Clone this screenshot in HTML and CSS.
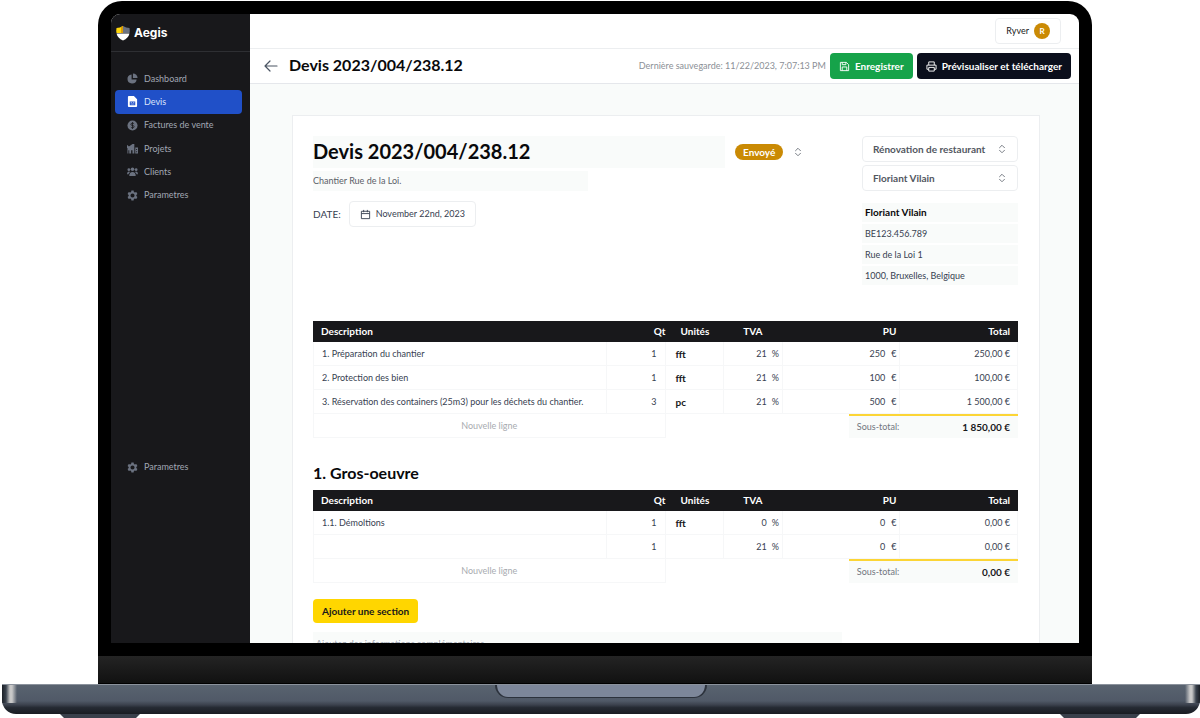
FILE: index.html
```html
<!DOCTYPE html>
<html lang="fr">
<head>
<meta charset="utf-8">
<meta name="viewport" content="width=device-width, initial-scale=1">
<title>Aegis – Devis 2023/004/238.12</title>
<link rel="stylesheet" href="styles.css">
</head>
<body>
<svg class="symbols" aria-hidden="true">
  <symbol id="gear" viewBox="0 0 24 24"><path fill-rule="evenodd" d="M9.600 1h4.800l.7 3.200 2 1.200 3.200-1 2.400 4.200-2.400 2.200v2.400l2.400 2.200-2.400 4.200-3.200-1-2 1.200-.7 3.200H9.600l-.7-3.200-2-1.200-3.200 1-2.400-4.200 2.400-2.200v-2.400L1.300 8.600l2.400-4.200 3.200 1 2-1.200zM12 7.500a4.500 4.500 0 1 0 0 9 4.500 4.500 0 0 0 0-9z"/></symbol>
  <symbol id="updown" viewBox="0 0 12 16"><path d="M2 6l4-4 4 4M2 10l4 4 4-4" fill="none" stroke="currentColor" stroke-width="1.500" stroke-linecap="round" stroke-linejoin="round"/></symbol>
</svg>
<div class="laptop">
  <div class="lid">
    <div class="screen">
      <aside class="sidebar">
        <a class="brand" href="#">
          <svg class="brand-logo" viewBox="0 0 28 32"><path fill="#ffd60a" d="M14 2v14H1q-1-5 0-10 7 0 13-4z"/><path fill="#6b7280" d="M14 2v14h13q1-5 0-10-7 0-13-4z"/><path fill="#d99a06" d="M10 4l4-2v14h-4z"/><path fill="#fff" d="M1 17h26q-2 9-13 14Q3 26 1 17z"/></svg>
          Aegis
        </a>
        <nav class="nav">
          <a href="#"><svg viewBox="0 0 24 24"><path d="M10 3v11h11A10 10 0 1 1 10 3z"/><path d="M13 1a10 10 0 0 1 10 10H13z"/></svg>Dashboard</a>
          <a class="active" href="#" aria-current="page"><svg viewBox="0 0 24 24"><path fill-rule="evenodd" d="M4 0h11l7 7v15q0 2-2 2H4q-2 0-2-2V2q0-2 2-2zm2 12v8h12v-8zm2 2h3v1H8zm5 0h3v1h-3zm-5 3h8v1H8z"/></svg>Devis</a>
          <a href="#"><svg viewBox="0 0 24 24"><circle cx="12" cy="12" r="11"/><path d="M15.500 8.500Q14.500 7 12 7q-3.500 0-3.500 2.500T12 12t3.500 2.500T12 17q-2.500 0-3.500-1.500M12 4.500v15" fill="none" stroke="#18181b" stroke-width="1.800"/></svg>Factures de vente</a>
          <a href="#"><svg viewBox="0 0 24 24"><path d="M0 5h2l1 2h2l7-5h4v21h-4v-7H9v7H5v-7H3v7H1V11H0z"/><path fill-rule="evenodd" d="M18 10h6v13h-6zm2 3v2h2v-2zm0 5v2h2v-2z"/></svg>Projets</a>
          <a href="#"><svg viewBox="0 0 24 24"><circle cx="12" cy="7" r="4"/><circle cx="4" cy="8" r="3"/><circle cx="20" cy="8" r="3"/><path d="M5 22q0-9 7-9t7 9zM0 18q0-6 4-6 2 0 3 1-3 2-4 5H0zM24 18q0-6-4-6-2 0-3 1 3 2 4 5h3z"/></svg>Clients</a>
          <a href="#"><svg><use href="#gear"/></svg>Parametres</a>
        </nav>
        <nav class="nav nav-secondary" aria-label="Réglages">
          <a href="#"><svg><use href="#gear"/></svg>Parametres</a>
        </nav>
      </aside>
      <div class="app">
        <header class="topbar">
          <button class="btn btn-outline account" type="button">Ryver <span class="avatar">R</span></button>
        </header>
        <header class="actionbar">
          <a class="back" href="#" aria-label="Retour"><svg viewBox="0 0 16 16"><path d="M14 8H2M7 3L2 8l5 5"/></svg></a>
          <h1>Devis 2023/004/238.12</h1>
          <span class="saved">Dernière sauvegarde: 11/22/2023, 7:07:13 PM</span>
          <button class="btn btn-green" type="button"><svg viewBox="0 0 24 24"><path d="M4 3h12l5 5v13H3V3zM7 3v5h8V3M7 21v-8h10v8"/></svg>Enregistrer</button>
          <button class="btn btn-dark" type="button"><svg viewBox="0 0 24 24"><path d="M6 9V2h12v7M6 18H2V9h20v9h-4M6 14h12v8H6z"/></svg>Prévisualiser et télécharger</button>
        </header>
        <main class="workspace">
          <article class="sheet">
            <section class="intro">
              <div class="intro-main">
                <input class="field field-title" aria-label="Titre" value="Devis 2023/004/238.12">
                <input class="field field-note" aria-label="Description" value="Chantier Rue de la Loi.">
                <div class="date-row">
                  <label for="date">DATE:</label>
                  <button id="date" class="btn btn-outline" type="button"><svg viewBox="0 0 24 24"><path d="M3 5h18v16H3zM3 10h18M8 2v5M16 2v5"/></svg>November 22nd, 2023</button>
                </div>
              </div>
              <button class="status" type="button" aria-haspopup="listbox"><span class="badge">Envoyé</span><svg class="updown"><use href="#updown"/></svg></button>
              <div class="client">
                <div class="picker"><select aria-label="Projet"><option>Rénovation de restaurant</option></select><svg class="updown"><use href="#updown"/></svg></div>
                <div class="picker"><select aria-label="Client"><option>Floriant Vilain</option></select><svg class="updown"><use href="#updown"/></svg></div>
                <div class="address">
                  <input class="field field-name" aria-label="Nom" value="Floriant Vilain">
                  <input class="field" aria-label="Numéro de TVA" value="BE123.456.789">
                  <input class="field" aria-label="Rue" value="Rue de la Loi 1">
                  <input class="field" aria-label="Ville" value="1000, Bruxelles, Belgique">
                </div>
              </div>
            </section>

            <section class="lines">
              <table>
                <colgroup><col class="c5"><col class="c1"><col class="c1"><col class="c1"><col class="c2"><col class="c2"></colgroup>
                <thead><tr><th>Description</th><th class="qty">Qt</th><th class="unit">Unités</th><th class="vat">TVA</th><th class="price">PU</th><th class="total">Total</th></tr></thead>
                <tbody>
                  <tr><td>1. Préparation du chantier</td><td class="qty">1</td><td class="unit">fft</td><td class="vat">21<span>%</span></td><td class="price">250<span>€</span></td><td class="total">250,00 €</td></tr>
                  <tr><td>2. Protection des bien</td><td class="qty">1</td><td class="unit">fft</td><td class="vat">21<span>%</span></td><td class="price">100<span>€</span></td><td class="total">100,00 €</td></tr>
                  <tr><td>3. Réservation des containers (25m3) pour les déchets du chantier.</td><td class="qty">3</td><td class="unit">pc</td><td class="vat">21<span>%</span></td><td class="price">500<span>€</span></td><td class="total">1 500,00 €</td></tr>
                </tbody>
              </table>
              <div class="lines-foot">
                <button class="new-line" type="button">Nouvelle ligne</button>
                <div class="subtotal"><span>Sous-total:</span><strong>1 850,00 €</strong></div>
              </div>
            </section>

            <section class="lines">
              <h2>1. Gros-oeuvre</h2>
              <table>
                <colgroup><col class="c5"><col class="c1"><col class="c1"><col class="c1"><col class="c2"><col class="c2"></colgroup>
                <thead><tr><th>Description</th><th class="qty">Qt</th><th class="unit">Unités</th><th class="vat">TVA</th><th class="price">PU</th><th class="total">Total</th></tr></thead>
                <tbody>
                  <tr><td>1.1. Démoltions</td><td class="qty">1</td><td class="unit">fft</td><td class="vat">0<span>%</span></td><td class="price">0<span>€</span></td><td class="total">0,00 €</td></tr>
                  <tr><td></td><td class="qty">1</td><td class="unit"></td><td class="vat">21<span>%</span></td><td class="price">0<span>€</span></td><td class="total">0,00 €</td></tr>
                </tbody>
              </table>
              <div class="lines-foot">
                <button class="new-line" type="button">Nouvelle ligne</button>
                <div class="subtotal"><span>Sous-total:</span><strong>0,00 €</strong></div>
              </div>
            </section>

            <button class="add-section" type="button">Ajouter une section</button>
            <textarea class="field extra" aria-label="Informations complémentaires" placeholder="Ajoutez des informations complémentaires."></textarea>
          </article>
        </main>
      </div>
    </div>
    <div class="chin"></div>
  </div>
  <div class="base"><div class="notch"></div></div>
  <div class="feet"><i></i><i></i></div>
</div>
</body>
</html>
```
FILE: styles.css
```css
* { box-sizing: border-box; }

body {
  margin: 0;
  background: #fff;
  color: #374151;
  font: 9px/12px Lato, "Open Sans", sans-serif;
}

button, input, select, textarea { font: inherit; color: inherit; margin: 0; }
button { cursor: pointer; }
a { color: inherit; text-decoration: none; }
h1, h2 { margin: 0; color: #09090b; font-weight: 700; }
.symbols { position: absolute; width: 0; height: 0; }

/* Laptop */
.laptop {
  display: flex;
  flex-direction: column;
  height: 100vh;
  min-height: 480px;
  padding-top: 1px;
  overflow: hidden;
}

.lid {
  flex: 1;
  min-height: 0;
  display: flex;
  flex-direction: column;
  margin: 0 108px 0 98px;
  padding: 13px 0 0;
  background: #000;
  border-radius: 24px 24px 0 0;
}

.screen {
  flex: 1;
  min-height: 0;
  display: flex;
  margin: 0 13px;
  border-radius: 9px 9px 0 0;
  overflow: hidden;
  background: #fff;
}

.chin {
  height: 41px;
  border-top: 13px solid #000;
  border-bottom: 1px solid #000;
  background: linear-gradient(#242424, #111);
}

.base {
  height: 30px;
  margin-left: 2px;
  border-top: 1px solid #8b929c;
  border-radius: 0 0 14px 14px;
  background:
    linear-gradient(90deg, #1b1f26 0, #3a424d 4px, #c8c8c8 8px, #c8c8c8 10px, transparent 15px) left top / 16px 18px no-repeat,
    linear-gradient(270deg, #1b1f26 0, #3a424d 4px, #c8c8c8 8px, #c8c8c8 10px, transparent 15px) right top / 16px 18px no-repeat,
    linear-gradient(#59636f 0, #505967 55%, #3c424e 68%, #252a33 78%, #191c22 100%);
}

.notch {
  width: 212px;
  height: 13px;
  margin: 0 auto;
  border: solid #2c323c;
  border-width: 0 2px 1px;
  border-radius: 0 0 13px 13px;
  background: #7d879a;
}

.feet { display: flex; justify-content: space-between; height: 4px; padding: 0 60px; }
.feet i { width: 80px; background: #3a404b; clip-path: polygon(0 0, 100% 0, 95% 100%, 5% 100%); }

/* Sidebar */
.sidebar { flex: 0 0 139px; background: #18181b; color: #a1a7b3; }

.brand {
  display: flex;
  align-items: center;
  gap: 4px;
  height: 38px;
  padding-left: 5px;
  border-bottom: 1px solid #2e2f33;
  color: #fff;
  font: 700 12px/16px Inter, sans-serif;
}
.brand-logo { width: 14px; height: 16px; }

.nav { display: grid; grid-auto-rows: 1fr; height: 140px; margin: 15px 8px 0 4px; }
.nav a { display: flex; align-items: center; gap: 6px; padding-left: 12px; border-radius: 4px; }
.nav svg { width: 11px; height: 11px; fill: #6b7280; }
.nav .active { background: #2050c8; color: #dbe4fb; }
.nav .active svg { fill: #fff; }
.nav-secondary { height: 24px; margin-top: 248px; }

/* Bars */
.app { flex: 1; min-width: 0; display: flex; flex-direction: column; }

.btn {
  display: inline-flex;
  align-items: center;
  gap: 5px;
  height: 26px;
  padding: 0 10px;
  border: 1px solid transparent;
  border-radius: 4px;
  white-space: nowrap;
}
.btn svg { width: 11px; height: 11px; fill: none; stroke: currentColor; stroke-width: 2; stroke-linejoin: round; }
.btn-outline { background: #fff; border-color: #eceef0; }
.btn-green, .btn-dark { padding: 0 8px; color: #fff; font-size: 10px; font-weight: 700; }
.btn-green { background: #16a34a; }
.btn-dark { background: #0b0f1c; }

.topbar {
  display: flex;
  align-items: center;
  justify-content: flex-end;
  height: 35px;
  padding-right: 18px;
  border-bottom: 1px solid #eceef0;
}
.account { color: #18181b; }
.avatar {
  width: 16px;
  height: 16px;
  border-radius: 50%;
  background: #ca8a04;
  color: #fff;
  font-size: 8px;
  font-weight: 700;
  line-height: 16px;
  text-align: center;
}

.actionbar {
  display: flex;
  align-items: center;
  gap: 4px;
  height: 35px;
  padding: 0 8px 0 13px;
  border-bottom: 1px solid #e5e7eb;
}
.actionbar h1 { flex: 1; margin-left: 6px; padding-bottom: 2px; font-size: 16px; line-height: 20px; }
.back svg { display: block; width: 16px; height: 16px; fill: none; stroke: #4b5563; stroke-width: 1.200; stroke-linecap: round; stroke-linejoin: round; }
.saved { color: #8b8f96; }

/* Quote sheet */
.workspace {
  flex: 1;
  min-height: 0;
  overflow: hidden;
  padding: 31px 39px 0 42px;
  background: #f9fbfa;
}
.sheet { min-height: 100%; padding: 20px 21px 20px 20px; border: 1px solid #eceef0; background: #fff; }

.intro { display: flex; align-items: flex-start; min-height: 185px; }
.intro-main { flex: 1; display: flex; flex-direction: column; align-items: flex-start; }

.field {
  display: block;
  width: 100%;
  height: 19px;
  padding: 0 3px 1px;
  border: 0;
  border-radius: 0;
  background: #f9fbfa;
}
.field-title { height: 32px; padding: 0 0 2px; color: #09090b; font-size: 20px; font-weight: 700; }
.field-note { width: 275px; height: 20px; margin-top: 3px; padding: 0 0 1px; color: #5b6068; }
.date-row { display: flex; align-items: center; gap: 8px; margin-top: 10px; }
.date-row label { font-size: 10px; }

.status {
  display: flex;
  align-items: center;
  gap: 11px;
  width: 137px;
  height: 32px;
  padding: 0 0 0 10px;
  border: 0;
  background: none;
}
.badge { padding: 2px 8px; border-radius: 8px; background: #ca8a04; color: #fff; font-size: 10px; font-weight: 700; }
.updown { width: 8px; height: 10px; color: #71767f; }

.client { width: 156px; }
.picker { position: relative; margin-bottom: 3px; }
.picker select {
  display: block;
  width: 100%;
  height: 26px;
  padding: 0 24px 0 10px;
  border: 1px solid #eceef0;
  border-radius: 4px;
  background: #fff;
  appearance: none;
  color: #52575f;
  font-size: 10px;
  font-weight: 700;
}
.picker .updown { position: absolute; right: 12px; top: 8px; pointer-events: none; }
.address { display: grid; gap: 2px; margin-top: 12px; }
.field-name { color: #09090b; font-size: 10px; font-weight: 700; }

/* Line items */
.lines { margin-bottom: 16px; }
.lines h2 { padding: 9px 0 7px; font-size: 16px; line-height: 20px; }

table { width: 100%; table-layout: fixed; border-collapse: separate; border-spacing: 0; }
.c5 { width: 41.667%; }
.c1 { width: 8.333%; }
.c2 { width: 16.667%; }
th { height: 21px; padding: 0 8px 2px; background: #18181b; color: #fff; font-size: 10px; font-weight: 700; text-align: left; }
td { height: 24px; padding: 0 8px; border: solid #f6f7f8; border-width: 0 1px 1px 0; white-space: nowrap; }
td:first-child { border-left-width: 1px; }
.qty, .price, .total, td.vat { text-align: right; }
th.qty { padding-right: 0; }
th.unit { padding-left: 15px; }
th.vat { padding-left: 19px; }
th.price { padding-right: 4px; }
td.unit { padding-left: 10px; color: #18181b; font-size: 10px; font-weight: 700; }
td.vat, td.price { padding-right: 3px; }
td.total { padding-right: 7px; }
td.vat span { margin-left: 5px; }
td.price span { margin-left: 6px; }

.lines-foot { display: flex; justify-content: space-between; }
.new-line {
  width: 50%;
  height: 24px;
  border: solid #f6f7f8;
  border-width: 0 1px 1px;
  background: #fff;
  color: #a8abb0;
}
.subtotal {
  display: flex;
  align-items: center;
  justify-content: space-between;
  width: 24%;
  height: 24px;
  padding: 0 8px;
  border-top: 2px solid #fcd535;
  background: #f9fbfa;
}
.subtotal span { color: #71767f; }
.subtotal strong { color: #18181b; font-size: 10px; }

.add-section {
  height: 24px;
  padding: 0 9px 1px;
  border: 0;
  border-radius: 4px;
  background: #ffd600;
  color: #18181b;
  font-size: 10px;
  font-weight: 700;
}
.extra { width: 75%; height: 60px; margin-top: 9px; padding: 6px 3px; resize: none; }
.extra::placeholder { color: #9ca3af; }
```
